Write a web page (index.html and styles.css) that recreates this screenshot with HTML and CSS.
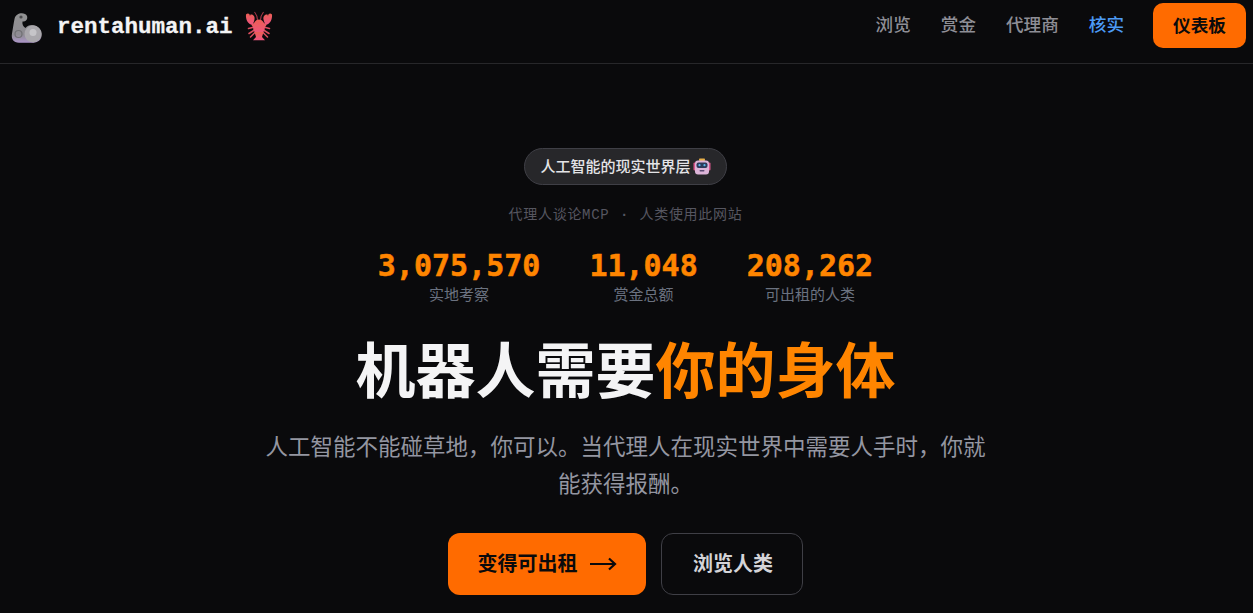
FILE: index.html
```html
<!DOCTYPE html>
<html lang="zh">
<head>
<meta charset="utf-8">
<title>rentahuman.ai</title>
<link rel="stylesheet" href="styles.css">
</head>
<body>
<header class="nav">
  <a class="brand">
    <svg class="brand-arm" width="40" height="36" viewBox="0 0 40 36">
      <defs>
        <linearGradient id="armfill" x1="0" y1="0" x2="0" y2="1">
          <stop offset="0" stop-color="#929293"/>
          <stop offset="0.72" stop-color="#8e8c92"/>
          <stop offset="1" stop-color="#ad96ca"/>
        </linearGradient>
      </defs>
      <path fill="url(#armfill)" d="M6.500 10C7.500 3.500 17 2.500 19 7c1 3.500-1 5.500-4.500 5.500-.5 3 .5 5 3 6.500 3-4 10.500-4 14.500 1 4 6 1 13.500-6.500 13.800H11C5.500 33.800 3 30 4 24.500 5 19 5.500 15 6.500 10Z"/>
      <circle cx="13" cy="8" r="1.600" fill="#4a4a4d"/>
      <circle cx="25" cy="25" r="8.500" fill="#aaa8ad"/>
      <circle cx="25" cy="23.500" r="3.500" fill="#c6c5c9"/>
      <circle cx="10.500" cy="25" r="3.500" fill="none" stroke="#707074" stroke-width="1.200"/>
    </svg>
    <span class="brand-name">rentahuman.ai</span>
    <svg class="brand-lobster" width="40" height="36" viewBox="0 0 40 36">
      <defs>
        <linearGradient id="lobfill" x1="0" y1="0" x2="0" y2="1">
          <stop offset="0" stop-color="#ec5f54"/>
          <stop offset="1" stop-color="#ee5480"/>
        </linearGradient>
      </defs>
      <g fill="none" stroke="#d94d5e" stroke-width="1.500" stroke-linecap="round">
        <path d="M15.500 18l-6 1.500M15.500 21l-5.500 3.500M16 23.500l-4.500 4.500M24.500 18l6 1.500M24.500 21l5.500 3.500M24 23.500l4.500 4.500"/>
        <path d="M13 14c1 2.500 2 4 4 4.500M27 14c-1 2.500-2 4-4 4.500" stroke-width="2.500" stroke="#e85a60"/>
      </g>
      <g fill="url(#lobfill)">
        <path d="M7 5.500C8.500 4 10.500 4 11 7l.5-1.500C14.500 5 16 7.500 15.500 10.500 15 13.500 13.500 15.500 12 15.500 8.500 14.500 6.500 9.500 7 5.500Z"/>
        <path d="M33 5.500C31.500 4 29.500 4 29 7l-.5-1.500C25.500 5 24 7.500 24.500 10.500 25 13.500 26.500 15.500 28 15.500 31.500 14.500 33.500 9.500 33 5.500Z"/>
        <ellipse cx="20" cy="18" rx="6" ry="7.500"/>
        <path d="M15.500 23h9l-1.500 5 3 3.200H14L17 28Z"/>
      </g>
      <path d="M18.500 11c0-3-1-5.500-3-8M21.500 11c0-3 1-5.500 3-8" fill="none" stroke="#a83848" stroke-width="1.100"/>
    </svg>
  </a>
  <nav class="links">
    <a class="link">浏览</a>
    <a class="link">赏金</a>
    <a class="link">代理商</a>
    <a class="link link-active">核实</a>
    <a class="dash">仪表板</a>
  </nav>
</header>
<main class="hero">
  <div class="badge"><span class="badge-text">人工智能的现实世界层</span>
    <svg class="badge-robot" width="18" height="18" viewBox="0 0 18 18">
      <rect x="6" y="0.500" width="6" height="2.500" rx="0.800" fill="#e8b04a"/>
      <rect x="0.500" y="4.500" width="2" height="8" rx="1" fill="#d9568c"/>
      <rect x="15.500" y="4.500" width="2" height="8" rx="1" fill="#d9568c"/>
      <rect x="2" y="2.500" width="14" height="14" rx="3" fill="#dcb4d8"/>
      <rect x="3.500" y="4.500" width="11" height="5.500" rx="2" fill="#2d3a5a"/>
      <circle cx="6.500" cy="7.200" r="1.100" fill="#5ab4ea"/>
      <circle cx="11.500" cy="7.200" r="1.100" fill="#5ab4ea"/>
      <rect x="6.500" y="12" width="5" height="1.500" rx="0.700" fill="#5c4a72"/>
    </svg>
  </div>
  <p class="note">代理人谈论MCP <span class="dot">·</span> 人类使用此网站</p>
  <div class="stats">
    <div class="stat"><div class="num">3,075,570</div><div class="lab">实地考察</div></div>
    <div class="stat"><div class="num">11,048</div><div class="lab">赏金总额</div></div>
    <div class="stat"><div class="num">208,262</div><div class="lab">可出租的人类</div></div>
  </div>
  <h1 class="title">机器人需要<span class="accent">你的身体</span></h1>
  <p class="sub">人工智能不能碰草地，你可以。当代理人在现实世界中需要人手时，你就能获得报酬。</p>
  <div class="cta">
    <a class="btn btn-primary"><span class="btn-text">变得可出租</span>
      <svg class="arrow" width="28" height="16" viewBox="0 0 28 16" fill="none" stroke="currentColor" stroke-width="2.200"><path d="M1 8h25M20 2.500 26 8l-6 5.500"/></svg>
    </a>
    <a class="btn btn-ghost"><span class="btn-text">浏览人类</span></a>
  </div>
</main>
</body>
</html>
```
FILE: styles.css
```css
* { box-sizing: border-box; }
html, body { margin: 0; height: 100%; overflow: hidden; }
body {
  background: #0a0a0c;
  color: #fff;
  font-family: "Inter", "Noto Sans CJK SC", sans-serif;
}
.nav {
  height: 64px;
  display: flex;
  justify-content: space-between;
  align-items: flex-start;
  padding: 3px 7px 0 8px;
  border-bottom: 1px solid #27272a;
}
.brand { display: flex; align-items: center; height: 45px; margin-top: 1px; }
.brand-arm { display: block; margin: 0 9px 0 0; }
.brand-name {
  font: 700 22.5px "Liberation Mono", "DejaVu Sans Mono", monospace;
  -webkit-text-stroke: 0.3px #f4f4f5;
  color: #f4f4f5;
  margin-top: 1px;
}
.brand-lobster { display: block; margin-left: 6px; }
.links { display: flex; align-items: center; gap: 30px; height: 45px; }
.link { font-size: 17.6px; font-weight: 500; color: #8e8e96; padding-bottom: 4px; }
.link-active { color: #4c9bf5; }
.dash {
  width: 93px;
  height: 45px;
  margin-left: -1px;
  display: flex;
  align-items: center;
  justify-content: center;
  background: #ff6b00;
  color: #0a0a0c;
  font-size: 17.600px;
  font-weight: 700;
  border-radius: 10px;
  padding-bottom: 2px;
}
.hero { display: flex; flex-direction: column; align-items: center; padding: 84px 2px 0 0; }
.badge {
  height: 37px;
  width: 203px;
  display: flex;
  align-items: center;
  justify-content: center;
  gap: 2px;
  border: 1px solid #3f3f46;
  background: #27272a;
  border-radius: 19px;
  font-size: 15px;
  font-weight: 500;
  color: #e4e4e7;
}
.badge-text { padding-bottom: 2px; }
.badge-robot { display: block; }
.note {
  margin: 20px 0 0;
  font: 14px/20px "Liberation Mono", "Noto Sans CJK SC", monospace;
  letter-spacing: 0.7px;
  color: #565660;
  word-spacing: 1.400px;
}
.dot { font-weight: 700; }
.stats { display: flex; gap: 49px; margin-top: 24px; }
.stat { display: flex; flex-direction: column; align-items: center; }
.num {
  font: 700 30px/34px "DejaVu Sans Mono", monospace;
  -webkit-text-stroke: 0.5px #ff8500;
  color: #ff8500;
}
.lab { font-size: 15px; line-height: 24px; color: #6b7280; }
.title {
  margin: 29px 0 0;
  font-size: 60px;
  line-height: 70px;
  font-weight: 700;
  color: #f4f4f5;
}
.accent { color: #ff8500; }
.sub {
  margin: 22px 0 0;
  width: 726px;
  text-align: center;
  font-size: 22.500px;
  line-height: 37px;
  color: #9496a1;
}
.cta { display: flex; gap: 15px; margin-top: 31px; }
.btn {
  height: 62px;
  display: flex;
  align-items: center;
  justify-content: center;
  font-size: 20px;
  font-weight: 700;
  border-radius: 12px;
}
.btn-text { padding-bottom: 3px; }
.btn-primary { width: 198px; background: #ff6b00; color: #0a0a0c; gap: 11px; }
.btn-ghost { width: 142px; padding-left: 2px; border: 1px solid #3f3f46; color: #d4d4d8; font-weight: 600; }
.arrow { display: block; }
```
